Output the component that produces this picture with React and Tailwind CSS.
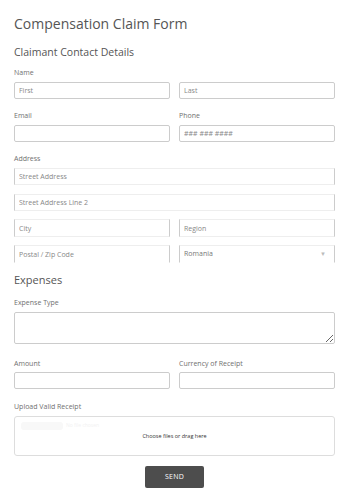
import React from 'react';

const FONT = { fontFamily: '"Open Sans", "Liberation Sans", sans-serif' };

function Label({ children, className = '' }) {
  return <p className={`text-[7px] leading-[10px] text-[#707070] ${className}`}>{children}</p>;
}

function Field({ placeholder, className = '' }) {
  return (
    <input
      placeholder={placeholder}
      className={`block w-full h-[17px] px-[4px] rounded-[2px] border border-[#ccc] bg-white text-[7px] text-[#666] placeholder:text-[#888] outline-none ${className}`}
    />
  );
}

function AddrField({ placeholder, className = '' }) {
  return (
    <input
      placeholder={placeholder}
      className={`block w-full px-[4px] border border-[#eee] border-l-[#ccc] border-r-[#ccc] bg-white text-[7px] text-[#666] placeholder:text-[#888] outline-none ${className}`}
    />
  );
}

export default function App() {
  return (
    <div className="w-[350px] h-[502px] bg-white overflow-hidden" style={FONT}>
      <div className="pl-[14px] pr-[15px] pt-[14px]">
        <h1 className="text-[14px] leading-[20px] text-[#555]">Compensation Claim Form</h1>
        <h2 className="mt-[10px] text-[10.5px] leading-[16px] text-[#555]">Claimant Contact Details</h2>

        {/* Name */}
        <Label className="mt-[8px]">Name</Label>
        <div className="mt-[4px] grid grid-cols-2 gap-[9px]">
          <Field placeholder="First" />
          <Field placeholder="Last" />
        </div>

        {/* Email / Phone */}
        <div className="mt-[12px] grid grid-cols-2 gap-[9px]">
          <div>
            <Label>Email</Label>
            <Field className="mt-[4px]" />
          </div>
          <div>
            <Label>Phone</Label>
            <Field className="mt-[4px]" placeholder="### ### ####" />
          </div>
        </div>

        {/* Address */}
        <Label className="mt-[12px]">Address</Label>
        <AddrField className="mt-[4px] h-[17px]" placeholder="Street Address" />
        <AddrField className="mt-[9px] h-[17px]" placeholder="Street Address Line 2" />
        <div className="mt-[8px] grid grid-cols-2 gap-[9px]">
          <AddrField className="h-[18px]" placeholder="City" />
          <AddrField className="h-[18px]" placeholder="Region" />
        </div>
        <div className="mt-[8px] grid grid-cols-2 gap-[9px]">
          <AddrField className="h-[18px] border-b-white" placeholder="Postal / Zip Code" />
          <div className="relative h-[18px] border border-[#eee] border-l-[#ccc] border-r-[#ccc] border-b-white px-[4px] flex items-center">
            <span className="text-[7px] text-[#777]">Romania</span>
            <span className="absolute right-[8px] top-[5px] text-[6px] leading-none text-[#bbb]">▼</span>
          </div>
        </div>

        {/* Expenses */}
        <h2 className="mt-[9px] text-[11px] leading-[16px] text-[#555]">Expenses</h2>
        <Label className="mt-[10px]">Expense Type</Label>
        <textarea className="mt-[4px] block w-full h-[32px] rounded-[2px] border border-[#ccc] bg-white outline-none resize" />

        <div className="mt-[15px] grid grid-cols-2 gap-[9px]">
          <div>
            <Label>Amount</Label>
            <Field className="mt-[3px]" />
          </div>
          <div>
            <Label>Currency of Receipt</Label>
            <Field className="mt-[3px]" />
          </div>
        </div>

        {/* Upload */}
        <Label className="mt-[13px]">Upload Valid Receipt</Label>
        <div className="relative mt-[4px] h-[40px] rounded-[3px] border border-[#ddd] bg-white flex items-center justify-center">
          <div className="absolute left-[6px] top-[5px] flex items-center gap-[3px]">
            <span className="w-[42px] h-[8px] rounded-[3px] bg-[#f8f8f8]" />
            <span className="text-[5px] text-[#f2f2f2]">No file chosen</span>
          </div>
          <span className="text-[5.5px] text-[#333]">Choose files or drag here</span>
        </div>

        <div className="mt-[10px] flex justify-center">
          <button className="w-[59px] h-[22px] rounded-[2px] bg-[#4d4d4d] text-white text-[7px] tracking-wide">SEND</button>
        </div>
      </div>
    </div>
  );
}
